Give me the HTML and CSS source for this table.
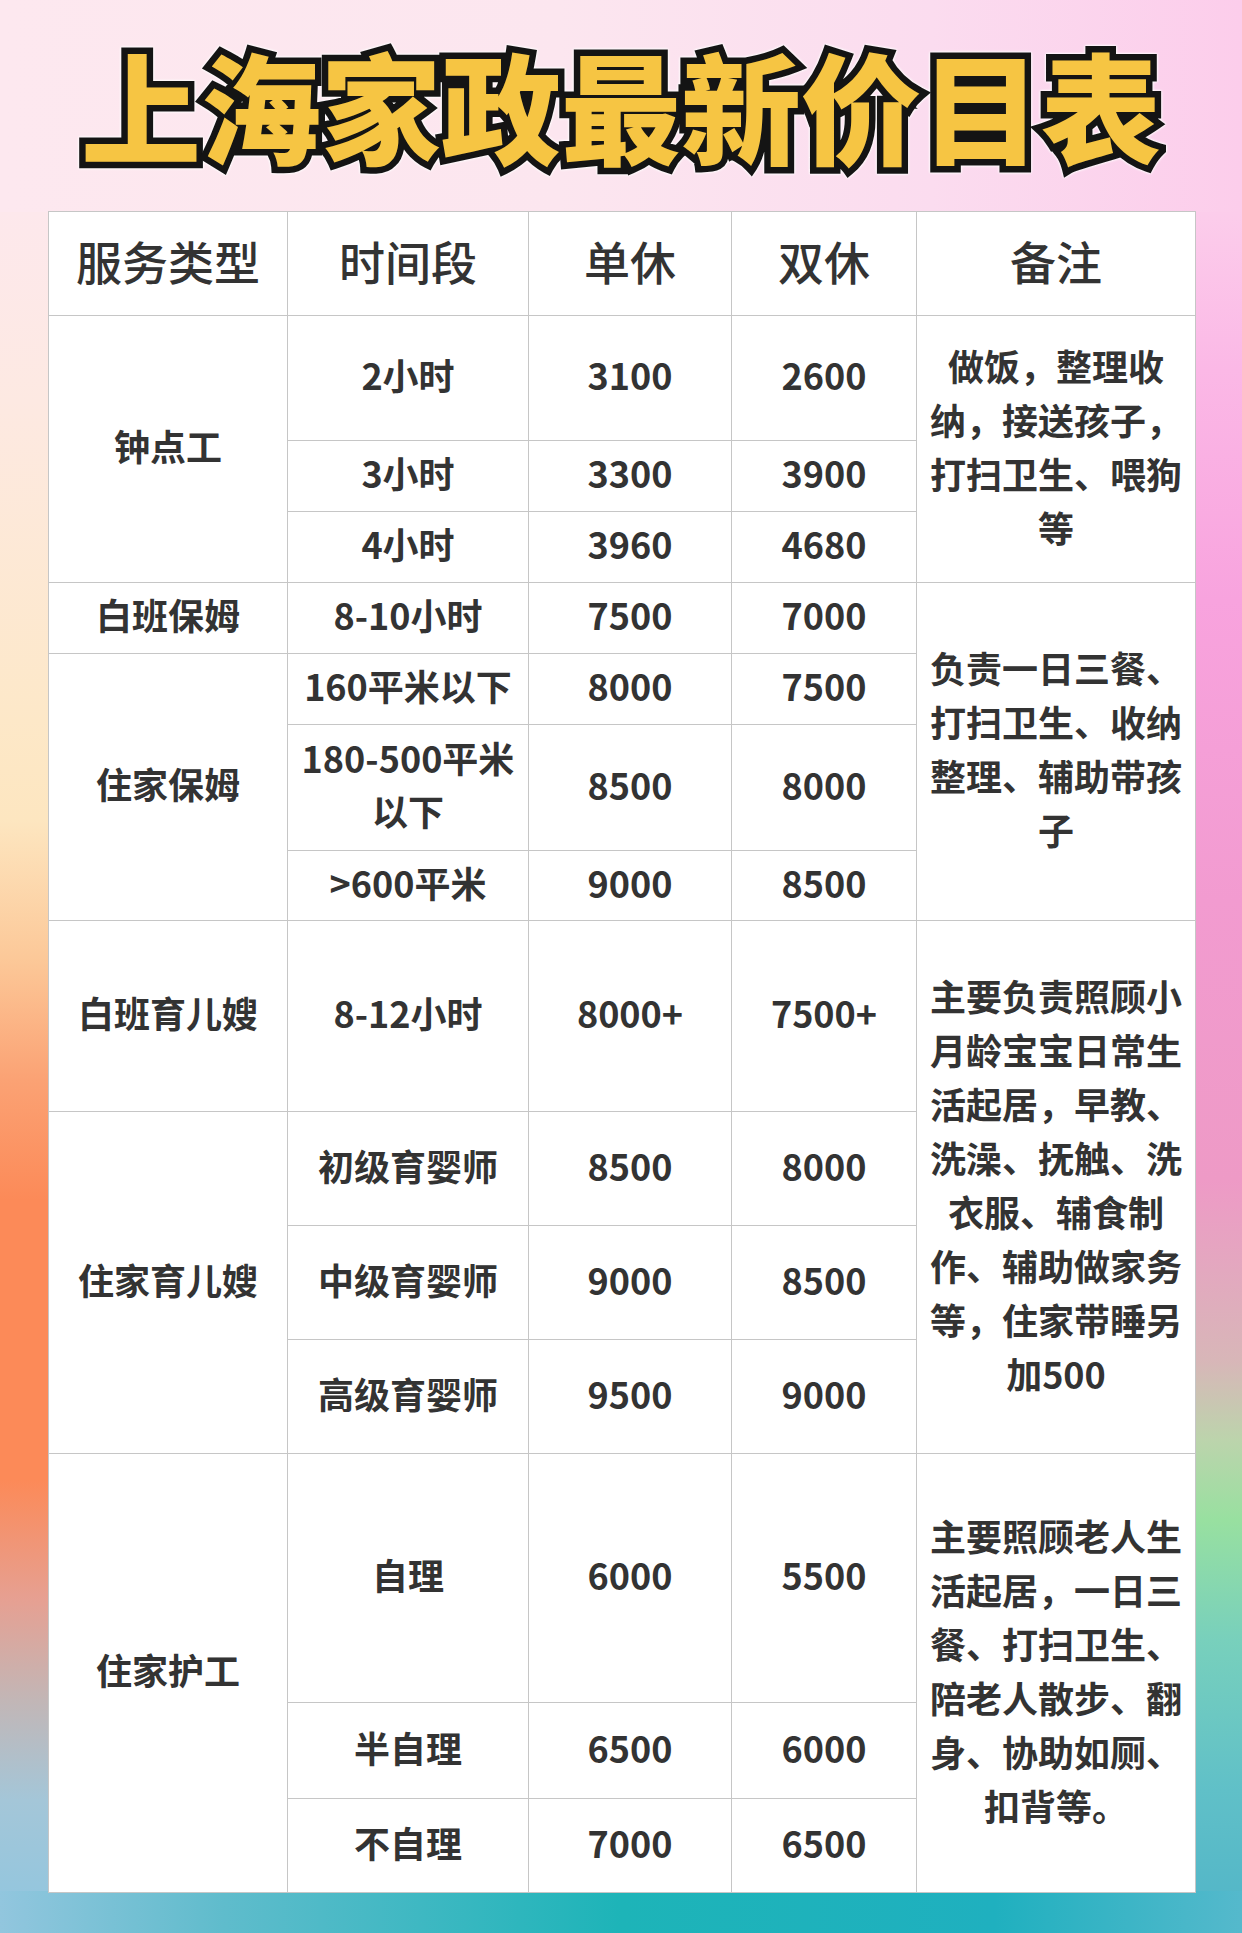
FILE: index.html
```html
<!DOCTYPE html>
<html lang="zh-CN">
<head>
<meta charset="utf-8">
<title>上海家政最新价目表</title>
<link rel="stylesheet" href="styles.css">
</head>
<body>
<div class="page">
  <h1 class="title">上海家政最新价目表</h1>
  <table class="price">
    <colgroup>
      <col class="c1"><col class="c2"><col class="c3"><col class="c4"><col class="c5">
    </colgroup>
    <thead>
      <tr class="h104">
        <th>服务类型</th><th>时间段</th><th>单休</th><th>双休</th><th>备注</th>
      </tr>
    </thead>
    <tbody>
      <tr class="h125">
        <td rowspan="3">钟点工</td><td>2小时</td><td>3100</td><td>2600</td>
        <td rowspan="3" class="note">做饭，整理收纳，接送孩子，打扫卫生、喂狗等</td>
      </tr>
      <tr class="h71"><td>3小时</td><td>3300</td><td>3900</td></tr>
      <tr class="h71"><td>4小时</td><td>3960</td><td>4680</td></tr>
      <tr class="h71">
        <td>白班保姆</td><td>8-10小时</td><td>7500</td><td>7000</td>
        <td rowspan="4" class="note">负责一日三餐、打扫卫生、收纳整理、辅助带孩子</td>
      </tr>
      <tr class="h71"><td rowspan="3">住家保姆</td><td>160平米以下</td><td>8000</td><td>7500</td></tr>
      <tr class="h126"><td>180-500平米以下</td><td>8500</td><td>8000</td></tr>
      <tr class="h70"><td>&gt;600平米</td><td>9000</td><td>8500</td></tr>
      <tr class="h191">
        <td>白班育儿嫂</td><td>8-12小时</td><td>8000+</td><td>7500+</td>
        <td rowspan="4" class="note">主要负责照顾小月龄宝宝日常生活起居，早教、洗澡、抚触、洗衣服、辅食制作、辅助做家务等，住家带睡另加500</td>
      </tr>
      <tr class="h114"><td rowspan="3">住家育儿嫂</td><td>初级育婴师</td><td>8500</td><td>8000</td></tr>
      <tr class="h114"><td>中级育婴师</td><td>9000</td><td>8500</td></tr>
      <tr class="h114"><td>高级育婴师</td><td>9500</td><td>9000</td></tr>
      <tr class="h249">
        <td rowspan="3">住家护工</td><td>自理</td><td>6000</td><td>5500</td>
        <td rowspan="3" class="note">主要照顾老人生活起居，一日三餐、打扫卫生、陪老人散步、翻身、协助如厕、扣背等。</td>
      </tr>
      <tr class="h96"><td>半自理</td><td>6500</td><td>6000</td></tr>
      <tr class="h94"><td>不自理</td><td>7000</td><td>6500</td></tr>
    </tbody>
  </table>
</div>
</body>
</html>
```
FILE: styles.css
```css
html, body {
  margin: 0;
  padding: 0;
}

body {
  width: 1242px;
  height: 1933px;
  overflow: hidden;
  font-family: "Noto Sans CJK SC", "Noto Sans", sans-serif;
  color: #333;
  background:
    linear-gradient(90deg, #fde8ef 0%, #fce6ef 45%, #fbdcef 75%, #fccdeb 100%) top left / 100% 212px no-repeat,
    linear-gradient(90deg, #92c6de 0%, #5fbccc 18%, #1db4b8 50%, #1fb0bf 80%, #55b9cc 100%) bottom left / 100% 42px no-repeat,
    linear-gradient(180deg, #fde8ef 0px, #fde8ec 212px, #fde9e2 400px, #fde8c8 720px, #fde6c0 820px, #fcc898 960px, #fba274 1080px, #fc8a58 1200px, #fc8a58 1480px, #e6a092 1600px, #c2b6b6 1700px, #a4c6d8 1800px, #8ec6e0 1933px) left top / 60px 100% no-repeat,
    linear-gradient(180deg, #fde4ee 0px, #fccdeb 212px, #fbb8e6 370px, #f8a3de 600px, #f29bd0 900px, #ee9ac6 1180px, #d8b6b8 1360px, #bcd4ac 1440px, #98e0a0 1520px, #78d0bc 1640px, #60c0c8 1790px, #50b4c8 1933px) right top / 60px 100% no-repeat,
    #fbe4ee;
}

.page {
  padding: 44px 0 0 48px;
}

.title {
  margin: 0 0 47px -48px;
  width: 1242px;
  height: 120px;
  text-align: center;
  font-family: "Noto Sans CJK SC", sans-serif;
  font-weight: 900;
  font-size: 120px;
  line-height: 120px;
  letter-spacing: 0;
  color: #f6c543;
  -webkit-text-stroke: 13px #141414;
  paint-order: stroke fill;
  filter: drop-shadow(0 0 1px #fff) drop-shadow(0 0 1px #fff);
}

.price {
  width: 1147px;
  table-layout: fixed;
  border-collapse: collapse;
  background: #fff;
  border: 1px solid #b9b9b9;
}

.c1 { width: 239px; }
.c2 { width: 241px; }
.c3 { width: 203px; }
.c4 { width: 185px; }
.c5 { width: 279px; }

.price th,
.price td {
  border: 1px solid #c6c6c6;
  text-align: center;
  vertical-align: middle;
  padding: 0 10px 7px;
  color: #333;
}

.price th {
  font-size: 46px;
  font-weight: 500;
}

.price td {
  font-size: 36px;
  font-weight: 700;
  line-height: 53px;
}

.price td.note {
  padding: 0 11px 7px;
  line-height: 54px;
}

.h104 { height: 104px; }
.h125 { height: 125px; }
.h126 { height: 126px; }
.h71 { height: 71px; }
.h70 { height: 70px; }
.h191 { height: 191px; }
.h114 { height: 114px; }
.h249 { height: 249px; }
.h96 { height: 96px; }
.h94 { height: 94px; }
```
